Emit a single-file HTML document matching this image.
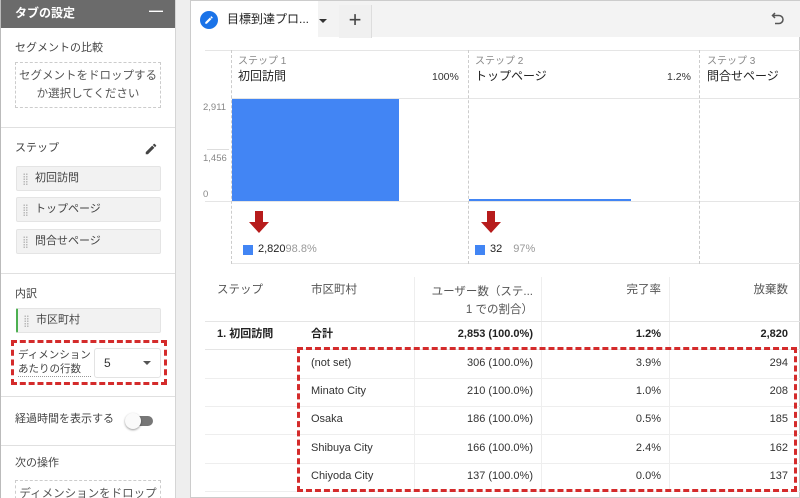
<!DOCTYPE html>
<html><head><meta charset="utf-8"><style>
*{box-sizing:border-box;margin:0;padding:0}
body{width:800px;height:498px;overflow:hidden;background:#eee;font-family:"Liberation Sans","Noto Sans CJK JP",sans-serif;color:#333;position:relative;font-size:11px;line-height:1.25}
.abs{position:absolute}
.left{left:0;top:0;width:176px;height:498px;background:#fff;border-right:1px solid #d5d5d5;border-left:1px solid #bbb;overflow:hidden}
.hd{left:0;top:0;width:176px;height:28px;background:#6b6b6b;color:#fff;font-weight:bold;font-size:12px;padding:6px 14px}
.sep{left:0;width:176px;height:1px;background:#e0e0e0}
.lbl{font-size:11px;color:#444}
.drop{border:1px dashed #ccc;text-align:center;color:#555;font-size:11.5px;line-height:18px}
.chip{left:15px;width:145px;height:25px;background:#f2f2f2;border:1px solid #e4e4e4;border-radius:2px;font-size:11px;padding:5px 0 0 18px;color:#444}
.chip:before{content:"";position:absolute;left:6px;top:6px;width:5px;height:12px;background:radial-gradient(circle,#bbb 0.8px,transparent 1px) 0 0/2.5px 2.5px}
.main{left:190px;top:0;width:610px;height:498px;background:#fff;border:1px solid #ccc}
.tabbar{left:0;top:0;width:610px;height:36px;background:#f3f3f3}
.dash{border-left:1px dashed #ccc}
.td{font-size:11px}
.r{text-align:right}
</style></head><body>
<div class="abs left">
<div class="abs hd">タブの設定<span style="position:absolute;right:14px;top:2px;font-size:14px">—</span></div>
<div class="abs lbl" style="left:14px;top:42px">セグメントの比較</div>
<div class="abs drop" style="left:14px;top:62px;width:146px;height:46px;padding-top:4px">セグメントをドロップする<br>か選択してください</div>
<div class="abs sep" style="top:127px"></div>
<div class="abs lbl" style="left:14px;top:142px">ステップ</div>
<svg class="abs" style="left:143px;top:142px" width="14" height="14" viewBox="0 0 24 24"><path d="M3 17.25V21h3.75L17.8 9.94l-3.75-3.75L3 17.25zM20.7 7.04a1 1 0 000-1.41l-2.34-2.34a1 1 0 00-1.41 0l-1.83 1.83 3.75 3.75 1.83-1.83z" fill="#444"/></svg>
<div class="abs chip" style="top:166px">初回訪問</div>
<div class="abs chip" style="top:197px">トップページ</div>
<div class="abs chip" style="top:229px">問合せページ</div>
<div class="abs sep" style="top:273px"></div>
<div class="abs lbl" style="left:14px;top:288px">内訳</div>
<div class="abs chip" style="top:308px;border-left:2px solid #4caf50">市区町村</div>
<div class="abs" style="left:10px;top:340px;width:156px;height:45px;border:3px dashed #d42b2b"></div>
<div class="abs lbl" style="left:17px;top:348px;line-height:14px;font-size:10.5px;border-bottom:1px dotted #999">ディメンション<br>あたりの行数</div>
<div class="abs" style="left:93px;top:348px;width:67px;height:30px;border:1px solid #e3e3e3;border-radius:3px;padding:7px 0 0 9px;font-size:12px">5<span style="position:absolute;right:9px;top:12px;border:4px solid transparent;border-top-color:#555"></span></div>
<div class="abs sep" style="top:396px"></div>
<div class="abs lbl" style="left:14px;top:413px">経過時間を表示する</div>
<div class="abs" style="left:128px;top:416px;width:24px;height:10px;border-radius:5px;background:#777"></div>
<div class="abs" style="left:124px;top:413px;width:16px;height:16px;border-radius:50%;background:#fafafa;box-shadow:0 1px 2px rgba(0,0,0,.4)"></div>
<div class="abs sep" style="top:445px"></div>
<div class="abs lbl" style="left:14px;top:457px">次の操作</div>
<div class="abs drop" style="left:14px;top:480px;width:146px;height:30px;padding-top:4px">ディメンションをドロップ</div>
</div>

<div class="abs main">
<div class="abs tabbar"></div>
<div class="abs" style="left:0;top:0;width:127px;height:37px;background:#fff"></div>
<div class="abs" style="left:9px;top:10px;width:18px;height:18px;border-radius:50%;background:#1a73e8"></div>
<svg class="abs" style="left:13px;top:14px" width="10" height="10" viewBox="0 0 24 24"><path d="M3 17.25V21h3.75L17.8 9.94l-3.75-3.75L3 17.25zM20.7 7.04a1 1 0 000-1.41l-2.34-2.34a1 1 0 00-1.41 0l-1.83 1.83 3.75 3.75 1.83-1.83z" fill="#fff"/></svg>
<div class="abs" style="left:36px;top:11px;font-size:12px;color:#222">目標到達プロ...</div>
<div class="abs" style="left:128px;top:18px;border:4px solid transparent;border-top-color:#333"></div>
<div class="abs" style="left:148px;top:4px;width:33px;height:33px;background:#f0f0f0;border-right:1px solid #ddd;font-size:22px;text-align:center;line-height:30px;color:#444">+</div>
<svg class="abs" style="left:580px;top:10px" width="14" height="14" viewBox="0 0 14 14"><path d="M4 2L1.5 4.5 4 7M1.5 4.5H8a4 4 0 010 8H4" fill="none" stroke="#555" stroke-width="1.5"/></svg>

<div class="abs" style="left:14px;top:49px;width:596px;height:1px;background:#e5e5e5"></div>
<div class="abs" style="left:40px;top:97px;width:570px;height:1px;background:#e5e5e5"></div>
<div class="abs" style="left:14px;top:200px;width:596px;height:1px;background:#e5e5e5"></div>
<div class="abs" style="left:40px;top:262px;width:570px;height:1px;background:#e5e5e5"></div>
<div class="abs dash" style="left:40px;top:49px;height:214px"></div>
<div class="abs dash" style="left:277px;top:49px;height:214px"></div>
<div class="abs dash" style="left:508px;top:49px;height:214px"></div>
<div class="abs" style="left:16px;top:148px;width:22px;height:1px;background:#ddd"></div>

<div class="abs" style="left:47px;top:55px;font-size:10px;color:#888">ステップ 1</div>
<div class="abs" style="left:47px;top:68px;font-size:12px;color:#222">初回訪問</div>
<div class="abs" style="left:241px;top:70px;font-size:10.5px">100%</div>
<div class="abs" style="left:284px;top:55px;font-size:10px;color:#888">ステップ 2</div>
<div class="abs" style="left:284px;top:68px;font-size:12px;color:#222">トップページ</div>
<div class="abs" style="left:476px;top:70px;font-size:10.5px">1.2%</div>
<div class="abs" style="left:516px;top:55px;font-size:10px;color:#888">ステップ 3</div>
<div class="abs" style="left:516px;top:68px;font-size:12px;color:#222">問合せページ</div>

<div class="abs" style="left:12px;top:101px;font-size:9.5px;color:#888">2,911</div>
<div class="abs" style="left:12px;top:152px;font-size:9.5px;color:#888">1,456</div>
<div class="abs" style="left:12px;top:188px;font-size:9.5px;color:#888">0</div>
<div class="abs" style="left:41px;top:98px;width:167px;height:102px;background:#4285f4"></div>
<div class="abs" style="left:278px;top:198px;width:162px;height:2px;background:#4285f4"></div>

<svg class="abs" style="left:58px;top:210px" width="20" height="22" viewBox="0 0 20 22"><path d="M6 0h8v11h6L10 22 0 11h6z" fill="#b71c1c"/></svg>
<svg class="abs" style="left:290px;top:210px" width="20" height="22" viewBox="0 0 20 22"><path d="M6 0h8v11h6L10 22 0 11h6z" fill="#b71c1c"/></svg>
<div class="abs" style="left:52px;top:244px;width:10px;height:10px;background:#4285f4"></div>
<div class="abs" style="left:67px;top:242px;font-size:11px;color:#222">2,820<span style="color:#999">98.8%</span></div>
<div class="abs" style="left:284px;top:244px;width:10px;height:10px;background:#4285f4"></div>
<div class="abs" style="left:299px;top:242px;font-size:11px;color:#222">32 <span style="color:#999;margin-left:8px">97%</span></div>

<div class="abs" style="left:223px;top:276px;width:1px;height:214px;background:#eee"></div>
<div class="abs" style="left:350px;top:276px;width:1px;height:214px;background:#eee"></div>
<div class="abs" style="left:478px;top:276px;width:1px;height:214px;background:#eee"></div>
<div class="abs" style="left:14px;top:320px;width:596px;height:1px;background:#e5e5e5"></div>
<div class="abs" style="left:14px;top:348px;width:596px;height:1px;background:#e5e5e5"></div>
<div class="abs" style="left:14px;top:377px;width:596px;height:1px;background:#eee"></div>
<div class="abs" style="left:14px;top:405px;width:596px;height:1px;background:#eee"></div>
<div class="abs" style="left:14px;top:433px;width:596px;height:1px;background:#eee"></div>
<div class="abs" style="left:14px;top:462px;width:596px;height:1px;background:#eee"></div>
<div class="abs" style="left:14px;top:490px;width:596px;height:1px;background:#eee"></div>

<div class="abs" style="left:26px;top:282px;font-size:11.5px;color:#555">ステップ</div>
<div class="abs" style="left:120px;top:282px;font-size:11.5px;color:#555">市区町村</div>
<div class="abs r" style="left:224px;top:282px;width:118px;font-size:11.5px;color:#555;line-height:18px">ユーザー数（ステ...<br>1 での割合）</div>
<div class="abs r" style="left:380px;top:282px;width:90px;font-size:11.5px;color:#555">完了率</div>
<div class="abs r" style="left:500px;top:282px;width:97px;font-size:11.5px;color:#555">放棄数</div>

<div class="abs" style="left:26px;top:327px;font-weight:bold;font-size:11px;color:#222">1. 初回訪問</div>
<div class="abs" style="left:120px;top:327px;font-weight:bold;font-size:11px;color:#222">合計</div>
<div class="abs r" style="left:224px;top:327px;width:118px;font-weight:bold;font-size:11px;color:#222">2,853 (100.0%)</div>
<div class="abs r" style="left:380px;top:327px;width:90px;font-weight:bold;font-size:11px;color:#222">1.2%</div>
<div class="abs r" style="left:500px;top:327px;width:97px;font-weight:bold;font-size:11px;color:#222">2,820</div>

<div class="abs td" style="left:120px;top:356px">(not set)</div><div class="abs td r" style="left:224px;top:356px;width:118px">306 (100.0%)</div><div class="abs td r" style="left:380px;top:356px;width:90px">3.9%</div><div class="abs td r" style="left:500px;top:356px;width:97px">294</div>
<div class="abs td" style="left:120px;top:384px">Minato City</div><div class="abs td r" style="left:224px;top:384px;width:118px">210 (100.0%)</div><div class="abs td r" style="left:380px;top:384px;width:90px">1.0%</div><div class="abs td r" style="left:500px;top:384px;width:97px">208</div>
<div class="abs td" style="left:120px;top:412px">Osaka</div><div class="abs td r" style="left:224px;top:412px;width:118px">186 (100.0%)</div><div class="abs td r" style="left:380px;top:412px;width:90px">0.5%</div><div class="abs td r" style="left:500px;top:412px;width:97px">185</div>
<div class="abs td" style="left:120px;top:441px">Shibuya City</div><div class="abs td r" style="left:224px;top:441px;width:118px">166 (100.0%)</div><div class="abs td r" style="left:380px;top:441px;width:90px">2.4%</div><div class="abs td r" style="left:500px;top:441px;width:97px">162</div>
<div class="abs td" style="left:120px;top:469px">Chiyoda City</div><div class="abs td r" style="left:224px;top:469px;width:118px">137 (100.0%)</div><div class="abs td r" style="left:380px;top:469px;width:90px">0.0%</div><div class="abs td r" style="left:500px;top:469px;width:97px">137</div>

<div class="abs" style="left:106px;top:346px;width:500px;height:145px;border:3px dashed #d42b2b"></div>
</div>
</body></html>
